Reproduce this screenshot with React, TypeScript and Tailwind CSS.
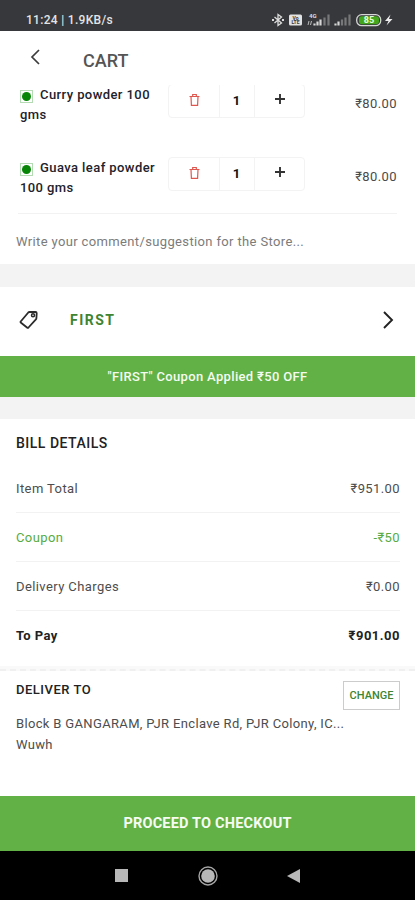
const items = [
  { name: "Curry powder 100 gms", qty: 1, price: "₹80.00" },
  { name: "Guava leaf powder 100 gms", qty: 1, price: "₹80.00" },
];

function StatusBar() {
  return (
    <div className="flex h-[31px] shrink-0 items-center justify-between bg-[#37383b] pt-2 pr-[21px] pl-[26px] text-[#e4e4e4]">
      <span className="text-[12px] leading-4 font-medium tracking-[0.3px]">11:24 | 1.9KB/s</span>
      <svg width="122" height="16" viewBox="0 0 122 16" fill="none">
        <path d="M2.500 5l7 6L6 13.500v-11L9.500 5l-7 6" stroke="#dcdcdc" strokeWidth="1.300" />
        <path d="M0 8h2M10 8h2" stroke="#dcdcdc" strokeWidth="1.800" />
        <rect x="17" y="2.500" width="13" height="11" rx="1.500" fill="#e2e2e2" />
        <text x="23.500" y="7.600" textAnchor="middle" fontSize="5" fontWeight="700" fill="#37383b">Vo</text>
        <text x="23.500" y="12.300" textAnchor="middle" fontSize="5" fontWeight="700" fill="#37383b">LTE</text>
        <text x="37" y="6" fontSize="6" fontWeight="700" fill="#dcdcdc">4G</text>
        <path d="M36 13l1-4M38.500 13l1-4" stroke="#bdbdbd" />
        <path d="M42.500 13.500v-2M45.500 13.500v-4M48.500 13.500v-6" stroke="#d6d6d6" strokeWidth="2.200" />
        <path d="M52.500 13.500v-8M56.500 13.500v-11" stroke="#77787a" strokeWidth="2.200" />
        <path d="M63.500 13.500v-2M66.500 13.500v-4" stroke="#d6d6d6" strokeWidth="2.200" />
        <path d="M70 13.500v-6M73.500 13.500v-8M77.500 13.500v-11" stroke="#77787a" strokeWidth="2.200" />
        <rect x="84.700" y="2.700" width="24" height="11" rx="5" stroke="#d6d6d6" strokeWidth="1.300" />
        <rect x="87" y="4.200" width="20" height="8" rx="3" fill="#43a51c" />
        <text x="97" y="11.400" textAnchor="middle" fontSize="9" fontWeight="700" fill="#e6ffd8">85</text>
        <path d="M118.500 2.500l-5.500 6.500h3.500l-2 4.500 6-6.500h-3.500z" fill="#ececec" />
      </svg>
    </div>
  );
}

function Header() {
  return (
    <header className="flex h-[54px] shrink-0 items-center bg-white pt-1 pl-[30px]">
      <svg width="11" height="16" viewBox="0 0 11 16" fill="none" className="-mt-1.5">
        <path d="M9 1L2 8l7 7" stroke="#3c3c3c" strokeWidth="1.700" />
      </svg>
      <h1 className="pt-px pl-[42px] text-[18px] leading-6 font-medium text-[#555]">CART</h1>
    </header>
  );
}

function TrashIcon() {
  return (
    <svg width="11" height="14" viewBox="0 0 11 14" fill="none" stroke="#e0574f" strokeWidth="1.200">
      <path d="M.5 3.500h10M3.700 3V1.500h3.600V3M2 3.500l.4 8.800h6.200L9 3.500" />
    </svg>
  );
}

function CartItem({ name, qty, price }: { name: string; qty: number; price: string }) {
  return (
    <div className="flex h-[73px] items-start pr-[18px] pl-5">
      <p className="w-[148px] pt-px pr-2 text-[13px] leading-5 font-medium tracking-[0.42px] text-[#22222c]">
        <span className="mr-[7px] inline-flex h-[13px] w-[13px] items-center justify-center border border-[#b5dbb5] align-[-2px]">
          <span className="h-[9px] w-[9px] rounded-full bg-[#078507]"></span>
        </span>
        {name}
      </p>
      <div className="flex h-[34px] w-[137px] rounded-sm border border-[#f3f3f3]">
        <button className="flex w-[50px] items-center justify-center pb-0.5">
          <TrashIcon />
        </button>
        <span className="flex w-[36px] items-center justify-center border-x border-[#f3f3f3] pr-px text-[13px] font-bold text-[#111]">{qty}</span>
        <button className="flex w-[49px] items-center justify-center pb-1">
          <svg width="10" height="10" viewBox="0 0 10 10" stroke="#333" strokeWidth="1.900">
            <path d="M0 5h10M5 0v10" />
          </svg>
        </button>
      </div>
      <span className="ml-auto pt-[10px] text-[13px] leading-5 tracking-[0.4px] text-[#4a4a4a]">{price}</span>
    </div>
  );
}

function CouponSection() {
  return (
    <section className="shrink-0 bg-white">
      <div className="flex h-[69px] items-center pr-[21px] pb-[3px] pl-[19px]">
        <svg width="20" height="20" viewBox="0 0 20 20" fill="none" stroke="#2b2b2b" strokeWidth="1.800" strokeLinejoin="round">
          <path d="M1.700 11.500L9.300 2.500q.5-.5 1.200-.5h6q1.200 0 1.200 1.200l-.3 5q0 .7-.5 1.200L9.500 17.500q-.7.700-1.500 0l-6-4.700q-.8-.6-.3-1.300z" />
          <circle cx="14" cy="5.300" r="1.500" strokeWidth="1.500" />
        </svg>
        <span className="pl-[31px] text-[14px] leading-5 font-bold tracking-[1.5px] text-[#3f8431]">FIRST</span>
        <svg width="11" height="18" viewBox="0 0 11 18" fill="none" className="ml-auto">
          <path d="M1 1l8 8-8 8" stroke="#222" strokeWidth="1.900" />
        </svg>
      </div>
      <div className="flex h-[41px] items-center justify-center bg-[#61b146] pt-px text-[13px] font-medium tracking-[0.34px] text-[#f4fbf1]">
        "FIRST" Coupon Applied ₹50 OFF
      </div>
    </section>
  );
}

function BillDetails() {
  return (
    <section className="h-[247px] shrink-0 bg-white pt-[14px] pr-[15px] pl-4 text-[13px] leading-5 tracking-[0.4px] text-[#4d4d4d]">
      <h2 className="text-[14px] font-medium tracking-[0.5px] text-[#222]">BILL DETAILS</h2>
      <div className="mt-[11px]">
        <div className="flex h-[49px] items-center justify-between border-b border-[#f2f2f2] pt-0.5">
          <span>Item Total</span>
          <span>₹951.00</span>
        </div>
        <div className="flex h-[49px] items-center justify-between border-b border-[#f2f2f2] pt-0.5 text-[#56ac43]">
          <span>Coupon</span>
          <span>-₹50</span>
        </div>
        <div className="flex h-[49px] items-center justify-between border-b border-[#f2f2f2] pt-0.5">
          <span>Delivery Charges</span>
          <span>₹0.00</span>
        </div>
        <div className="flex h-[49px] items-center justify-between font-bold text-[#222]">
          <span>To Pay</span>
          <span className="tracking-[0.5px]">₹901.00</span>
        </div>
      </div>
    </section>
  );
}

function DeliverTo() {
  return (
    <section className="h-[130px] shrink-0 bg-white">
      <div className="h-[5px] border-b-2 border-dashed border-[#f0f0f0] bg-[#f9f9f9]"></div>
      <div className="flex items-start justify-between pt-[9px] pr-[15px] pl-4">
        <h2 className="text-[13px] leading-5 font-medium tracking-[0.5px] text-[#222]">DELIVER TO</h2>
        <button className="mt-px h-[29px] w-[57px] border border-[#ccc] pt-0.5 text-[11px] font-medium text-[#3f8431]">CHANGE</button>
      </div>
      <p className="pl-4 pt-[3px] text-[13px] leading-[21px] tracking-[0.34px] text-[#4d4d4d]">
        Block B GANGARAM, PJR Enclave Rd, PJR Colony, IC...
        <br />
        Wuwh
      </p>
    </section>
  );
}

function NavBar() {
  return (
    <nav className="flex h-[49px] shrink-0 items-center justify-between bg-black pr-[115px] pl-[115px]">
      <span className="h-[13px] w-[13px] bg-[#b8b8b8]"></span>
      <svg width="20" height="20" viewBox="0 0 20 20" fill="none">
        <circle cx="10" cy="10" r="9" stroke="#a5a5a5" strokeWidth="1.400" />
        <circle cx="10" cy="10" r="6.800" fill="#b8b8b8" />
      </svg>
      <svg width="13" height="14" viewBox="0 0 13 14">
        <path d="M0 7l13-7v14z" fill="#b8b8b8" />
      </svg>
    </nav>
  );
}

export default function App() {
  return (
    <div className="flex h-[900px] w-[415px] flex-col overflow-hidden bg-[#f3f3f3] font-['Roboto',sans-serif]">
      <StatusBar />
      <Header />
      <section className="flex h-[179px] shrink-0 flex-col overflow-hidden bg-white">
        <div className="-mt-px">
          {items.map((item) => (
            <CartItem key={item.name} {...item} />
          ))}
        </div>
        <div className="mx-[18px] -mt-[17px] h-px bg-[#f2f2f2]"></div>
        <p className="mt-auto mb-3 pl-4 text-[13px] leading-5 tracking-[0.36px] text-[#7b7b7b]">
          Write your comment/suggestion for the Store...
        </p>
      </section>
      <div className="h-[23px] shrink-0"></div>
      <CouponSection />
      <div className="h-[22px] shrink-0"></div>
      <BillDetails />
      <DeliverTo />
      <button className="h-[55px] shrink-0 bg-[#61b146] text-[14.5px] font-bold tracking-[0.2px] text-[#f6fcf3]">PROCEED TO CHECKOUT</button>
      <NavBar />
    </div>
  );
}
